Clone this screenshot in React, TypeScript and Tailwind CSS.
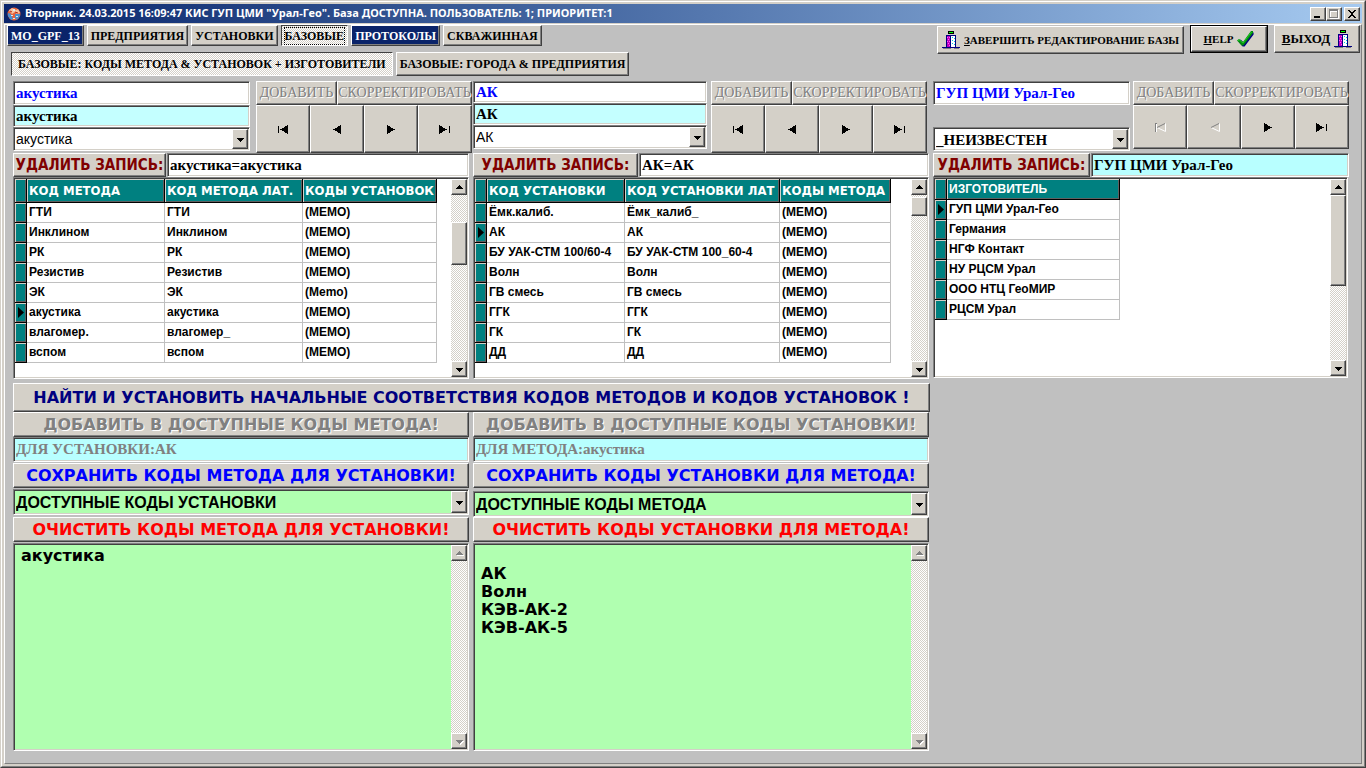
import React from 'react';
import clsx from 'clsx';

const bevel =
  'border border-t-white border-l-white border-r-[#404040] border-b-[#404040] shadow-[inset_-1px_-1px_0_#808080]';
const raised = `${bevel} bg-[#d4d0c8]`;
const sunken =
  'border border-t-[#808080] border-l-[#808080] border-r-white border-b-white p-px shadow-[inset_1px_1px_0_#404040,inset_-1px_-1px_0_#d4d0c8]';
const dither = 'bg-[repeating-conic-gradient(#ffffff_0_25%,#d4d0c8_0_50%)] bg-[length:2px_2px]';
const pressed = `border border-t-[#404040] border-l-[#404040] border-r-white border-b-white ${dither}`;
const serif = 'font-["Liberation_Serif",serif] font-bold';
const verdana = 'font-["DejaVu_Sans",sans-serif] font-bold';
const arial = 'font-["Liberation_Sans",sans-serif] font-bold';
const tahoma = 'font-["DejaVu_Sans_Condensed","DejaVu_Sans",sans-serif] font-bold';
const disabledText = 'text-[#808080] [text-shadow:1px_1px_0_#fff]';

type Dir = 'up' | 'down' | 'left' | 'right';

function Arrow({ dir, muted }: { dir: Dir; muted?: boolean }) {
  const paths: Record<Dir, string> = {
    up: 'M4 2h1v1h1v1h1v1h1v1H1V5h1V4h1V3h1z',
    down: 'M1 3h7v1H7v1H6v1H5v1H4V6H3V5H2V4H1z',
    left: 'M0 4.5 8 0v9z',
    right: 'M8 4.5 0 0v9z',
  };
  return (
    <svg viewBox="0 0 9 9" className="size-[9px] shrink-0" shapeRendering="crispEdges">
      {muted && <path d={paths[dir]} fill="#fff" transform="translate(1 1)" />}
      <path d={paths[dir]} fill={muted ? '#808080' : '#000'} />
    </svg>
  );
}

// Greyed navigator glyphs are only an outline: dark on the slanted side, white on the others
function OutlineArrow({ bar }: { bar?: boolean }) {
  return (
    <svg viewBox="0 0 13 11" className="h-[11px] w-[13px] shrink-0" fill="none">
      {bar && <path d="M1.500 1v9M1 1.500h2" stroke="#808080" />}
      {bar && <path d="M2.500 2v8" stroke="#fff" />}
      <path d="M11.500 1.500v8L3 5.500" stroke="#fff" />
      <path d="M11 1.500 3 5.500" stroke="#808080" />
    </svg>
  );
}

function DoorIcon() {
  return (
    <svg viewBox="0 0 18 18" className="size-[18px] shrink-0" shapeRendering="crispEdges">
      <path d="M0 16h4V4h10v12h4v1H0z" fill="#000080" />
      <path d="M6 0h6v3H6z" fill="#000" />
      <path d="M7 1h4v1H7z" fill="#00ff00" />
      <path d="M5 5h4v11H5z" fill="#c000c0" />
      <path d="M5 6h1v1H5zM7 6h1v1H7zM6 8h1v1H6zM5 10h1v1H5zM7 10h1v1H7zM6 12h1v1H6zM7 14h1v1H7z" fill="#ff60ff" />
      <path d="M9 5h4v11H9z" fill="#fff" />
      <path d="M10 6h1v1h-1zM12 7h1v1h-1zM10 9h1v1h-1zM12 10h1v1h-1zM10 12h1v1h-1zM12 13h1v1h-1z" fill="#00d0e0" />
      <path d="M8 5h1v11H8z" fill="#000080" />
      <path d="M1 17h8v1H1zM12 17h5v1h-5z" fill="#808080" />
    </svg>
  );
}

function CheckIcon() {
  return (
    <svg viewBox="0 0 17 16" className="h-4 w-[17px] shrink-0">
      <path d="M1 10 3 8l3 3L14 1h2v2L7 15H5z" fill="#000080" transform="translate(.6 .6)" />
      <path d="M0 9.500 2 8l4 3L14 0h2v2L6.500 14.500H4.500z" fill="#008a10" />
      <path d="M1 9.500 2.500 9 6 12 14.500 1" stroke="#20d020" strokeWidth="1" fill="none" />
    </svg>
  );
}

function AppIcon() {
  return (
    <svg viewBox="0 0 14 14" className="size-[14px] shrink-0">
      <circle cx="7" cy="7" r="6.500" fill="#e8633c" />
      <path d="M2 3.500 5 1l4 2 2-1 2 4-3 1-2-2-3 2z" fill="#f7c3a0" />
      <path d="M1 6l3 1 2 5-2 1-3-4zM8 7l5 0 0 2-3 4-2-2z" fill="#4a90d0" />
      <path d="M6 2h2v2H6zM4 8h2v1H4zM9 9h2v1H9zM6 11h2v1H6z" fill="#d8ecf8" />
      <path d="M3 4l2 1M8 5l3 1" stroke="#b02818" fill="none" />
    </svg>
  );
}

function ScrollBar({ before, thumb, muted }: { before?: string; thumb?: string; muted?: boolean }) {
  return (
    <div className={clsx('flex w-4 shrink-0 flex-col', dither)}>
      <button aria-label="Вверх" className={clsx('flex h-4 items-center justify-center', raised)}>
        <Arrow dir="up" muted={muted} />
      </button>
      {before && <div className={before} />}
      {thumb && <div className={clsx(raised, thumb)} />}
      <button aria-label="Вниз" className={clsx('mt-auto flex h-4 items-center justify-center', raised)}>
        <Arrow dir="down" muted={muted} />
      </button>
    </div>
  );
}

function Tab({ children, active, navy }: { children: React.ReactNode; active?: boolean; navy?: boolean }) {
  return (
    <button
      className={clsx(
        'h-[21px] whitespace-nowrap px-[3px] text-xs leading-4',
        serif,
        active && pressed,
        !active && !navy && raised,
        navy && bevel,
        navy && 'bg-[#0a246a] text-white'
      )}
    >
      <span className={clsx('block', active && 'outline-1 outline-dotted outline-black')}>{children}</span>
    </button>
  );
}

function Field({ label, value, className }: { label: string; value: string; className?: string }) {
  return (
    <input
      aria-label={label}
      defaultValue={value}
      className={clsx('block w-full min-w-0 pl-0.5 outline-none', sunken, serif, className)}
    />
  );
}

function Combo({ label, value, className }: { label: string; value: string; className?: string }) {
  return (
    <div className={clsx('relative', sunken, className)}>
      <select aria-label={label} className="block size-full appearance-none pl-px outline-none">
        <option>{value}</option>
      </select>
      <span
        className={clsx(
          'pointer-events-none absolute inset-y-px right-px flex w-4 items-center justify-center',
          raised
        )}
      >
        <Arrow dir="down" />
      </span>
    </div>
  );
}

function NavButton({ label, children, disabled }: { label: string; children: React.ReactNode; disabled?: boolean }) {
  return (
    <button aria-label={label} disabled={disabled} className={clsx('flex items-center justify-center', raised)}>
      {children}
    </button>
  );
}

function Bar() {
  return <span className="mx-px h-[7px] w-px bg-black" />;
}

function Navigator({ atStart, className }: { atStart?: boolean; className?: string }) {
  return (
    <div className={clsx('w-[216px] shrink-0', className)}>
      <div className="flex">
        {['ДОБАВИТЬ', 'СКОРРЕКТИРОВАТЬ'].map((text) => (
          <button
            key={text}
            disabled
            className={clsx(
              'h-6 whitespace-nowrap font-["Liberation_Serif",serif] text-sm leading-5 first:w-[81px] last:w-[135px]',
              raised,
              disabledText
            )}
          >
            {text}
          </button>
        ))}
      </div>
      <div className={clsx('grid grid-cols-4', atStart ? 'h-11' : 'h-12')}>
        <NavButton label="Первая" disabled={atStart}>
          {atStart ? <OutlineArrow bar /> : <><Bar /><Arrow dir="left" /></>}
        </NavButton>
        <NavButton label="Предыдущая" disabled={atStart}>
          {atStart ? <OutlineArrow /> : <Arrow dir="left" />}
        </NavButton>
        <NavButton label="Следующая">
          <Arrow dir="right" />
        </NavButton>
        <NavButton label="Последняя">
          <Arrow dir="right" />
          <Bar />
        </NavButton>
      </div>
    </div>
  );
}

function DeleteRow({ value, button, field }: { value: string; button: string; field?: string }) {
  return (
    <div className="mr-1 flex h-6 gap-px">
      <button className={clsx('shrink-0 whitespace-nowrap text-[15px] leading-5 text-[#800000]', tahoma, raised, button)}>
        УДАЛИТЬ ЗАПИСЬ:
      </button>
      <Field label="Запись" value={value} className={clsx('text-[15px]', field ?? 'bg-white')} />
    </div>
  );
}

interface GridProps {
  head: string[];
  widths: string[];
  rows: string[][];
  current: number;
  headClass: string;
  className?: string;
  before?: string;
  thumb: string;
}

const tealCell =
  'border-r border-b border-black bg-[#008080] shadow-[inset_1px_1px_0_#d4d0c8,inset_-1px_-1px_0_#606060]';

function DataGrid({ head, widths, rows, current, headClass, className, before, thumb }: GridProps) {
  return (
    <div className={clsx('flex justify-between bg-white', sunken, className)}>
      <table className="border-separate border-spacing-0 self-start text-left text-xs">
        <thead>
          <tr>
            <th className={clsx('w-3 min-w-3 p-0', tealCell)} />
            {head.map((h, i) => (
              <th
                key={h}
                className={clsx('overflow-hidden whitespace-nowrap px-0.5 py-0 text-white', tealCell, headClass, widths[i])}
              >
                {h}
              </th>
            ))}
          </tr>
        </thead>
        <tbody className={arial}>
          {rows.map((row, r) => (
            <tr key={row[0]}>
              <td className={clsx('p-0', tealCell)}>
                {r === current && (
                  <svg viewBox="0 0 6 11" className="ml-[3px] h-[11px] w-1.5">
                    <path d="M0 0 6 5.500 0 11z" />
                  </svg>
                )}
              </td>
              {row.map((cell, i) => (
                <td
                  key={i}
                  className="h-5 whitespace-nowrap border-r border-b border-[#c0c0c0] px-0.5 py-0 leading-[19px]"
                >
                  {cell}
                </td>
              ))}
            </tr>
          ))}
        </tbody>
      </table>
      <ScrollBar before={before} thumb={thumb} />
    </div>
  );
}

function BigButton({ children, className, disabled }: { children: React.ReactNode; className?: string; disabled?: boolean }) {
  return (
    <button
      disabled={disabled}
      className={clsx('whitespace-nowrap text-base leading-5', verdana, raised, disabled && disabledText, className)}
    >
      {children}
    </button>
  );
}

interface CodesProps {
  add: string;
  target: string;
  save: string;
  combo: string;
  clear: string;
  memo: string;
  comboClass: string;
}

function CodesPanel({ add, target, save, combo, clear, memo, comboClass }: CodesProps) {
  return (
    <div className="mr-1 flex min-w-0 flex-col">
      <BigButton disabled className="h-[25px]">{add}</BigButton>
      <Field label="Для" value={target} className="h-[25px] bg-[#b8ffff] text-[15px] text-[#808080]" />
      <BigButton className="mt-px h-[25px] text-[#0000ff]">{save}</BigButton>
      <Combo label={combo} value={combo} className={clsx('h-[26px] bg-[#b0ffb0] text-base', arial, comboClass)} />
      <BigButton className="h-[25px] text-[#ff0000]">{clear}</BigButton>
      <div className={clsx('mt-px flex flex-1 bg-[#b0ffb0]', sunken)}>
        <textarea
          aria-label={clear}
          defaultValue={memo}
          className={clsx('block min-w-0 flex-1 resize-none px-1.5 py-0.5 text-base leading-[18px] outline-none', verdana)}
        />
        <ScrollBar muted />
      </div>
    </div>
  );
}

const methods = [
  ['ГТИ', 'ГТИ', '(МЕМО)'],
  ['Инклином', 'Инклином', '(МЕМО)'],
  ['РК', 'РК', '(МЕМО)'],
  ['Резистив', 'Резистив', '(МЕМО)'],
  ['ЭК', 'ЭК', '(Memo)'],
  ['акустика', 'акустика', '(МЕМО)'],
  ['влагомер.', 'влагомер_', '(МЕМО)'],
  ['вспом', 'вспом', '(МЕМО)'],
];

const devices = [
  ['Ёмк.калиб.', 'Ёмк_калиб_', '(МЕМО)'],
  ['АК', 'АК', '(МЕМО)'],
  ['БУ УАК-СТМ 100/60-4', 'БУ УАК-СТМ 100_60-4', '(МЕМО)'],
  ['Волн', 'Волн', '(МЕМО)'],
  ['ГВ смесь', 'ГВ смесь', '(МЕМО)'],
  ['ГГК', 'ГГК', '(МЕМО)'],
  ['ГК', 'ГК', '(МЕМО)'],
  ['ДД', 'ДД', '(МЕМО)'],
];

const makers = [
  ['ГУП ЦМИ Урал-Гео'],
  ['Германия'],
  ['НГФ Контакт'],
  ['НУ РЦСМ Урал'],
  ['ООО НТЦ ГеоМИР'],
  ['РЦСМ Урал'],
];

function TitleBar() {
  const box = 'flex h-[14px] items-center justify-center';
  return (
    <header className="flex h-[19px] items-center gap-1 bg-linear-to-r from-[#0a246a] to-[#a6caf0] pl-[3px] pr-0.5">
      <AppIcon />
      <h1 className='flex-1 whitespace-nowrap font-["Noto_Sans",sans-serif] text-[11px] font-bold text-white'>
        Вторник. 24.03.2015 16:09:47 КИС ГУП ЦМИ "Урал-Гео". База ДОСТУПНА. ПОЛЬЗОВАТЕЛЬ: 1; ПРИОРИТЕТ:1
      </h1>
      <div className="flex">
        <button aria-label="Свернуть" className={clsx(box, 'w-4', raised)}>
          <svg viewBox="0 0 10 10" className="size-2.5" shapeRendering="crispEdges">
            <path d="M1 7h6v2H1z" />
          </svg>
        </button>
        <button aria-label="Развернуть" disabled className={clsx(box, 'w-4', raised)}>
          <svg viewBox="0 0 10 10" className="size-2.5" shapeRendering="crispEdges" fill="none">
            <path d="M1.500 1.500h8v8h-8zM1 2.500h9" stroke="#fff" />
            <path d="M.5.5h8v8h-8zM0 1.500h9" stroke="#808080" />
          </svg>
        </button>
        <button aria-label="Закрыть" className={clsx(box, 'ml-0.5 w-4', raised)}>
          <svg viewBox="0 0 10 10" className="size-2.5" shapeRendering="crispEdges">
            <path d="M1 1h2v1h1v1h2V2h1V1h2v1H8v1H7v1H6v2h1v1h1v1h1v1H7V8H6V7H4v1H3v1H1V8h1V7h1V6h1V4H3V3H2V2H1z" />
          </svg>
        </button>
      </div>
    </header>
  );
}

export default function App() {
  return (
    <div className="flex min-h-screen flex-col border border-[#d4d0c8] border-r-[#404040] border-b-[#404040] bg-[#d4d0c8]">
      <div className="flex flex-1 flex-col border border-t-white border-l-white border-r-[#808080] border-b-[#808080] p-0.5">
        <TitleBar />
        <div className="mt-px flex flex-1 flex-col border border-t-white border-l-white border-r-[#808080] border-b-[#808080] bg-[#c0c0c0]">
          <div className="flex justify-between">
            <nav className="pl-0.5">
              <div className="flex gap-[3px]">
                <Tab navy>MO_GPF_13</Tab>
                <Tab>ПРЕДПРИЯТИЯ</Tab>
                <Tab>УСТАНОВКИ</Tab>
                <Tab active>БАЗОВЫЕ</Tab>
                <Tab navy>ПРОТОКОЛЫ</Tab>
                <Tab>СКВАЖИННАЯ</Tab>
              </div>
              <div className={clsx('mt-1.5 flex gap-[3px] pl-1 text-xs', serif)}>
                <button className={clsx('h-6 whitespace-nowrap px-1.5', pressed)}>
                  БАЗОВЫЕ: КОДЫ МЕТОДА &amp; УСТАНОВОК + ИЗГОТОВИТЕЛИ
                </button>
                <button className={clsx('h-6 whitespace-nowrap px-[3px]', raised)}>
                  БАЗОВЫЕ: ГОРОДА &amp; ПРЕДПРИЯТИЯ
                </button>
              </div>
            </nav>
            <div className={clsx('flex gap-1.5 pr-px text-[11px]', serif)}>
              <button className={clsx('mt-px flex h-7 items-center gap-1 whitespace-nowrap px-1', raised)}>
                <DoorIcon />
                <span><u>З</u>АВЕРШИТЬ РЕДАКТИРОВАНИЕ БАЗЫ</span>
              </button>
              <div className="h-7 border border-black">
                <button className={clsx('flex h-full w-[76px] items-center justify-center gap-1', raised)}>
                  <span><u>H</u>ELP</span>
                  <CheckIcon />
                </button>
              </div>
              <button className={clsx('flex h-7 w-[86px] items-center justify-center gap-1 text-[13px]', raised)}>
                <span><u>В</u>ЫХОД</span>
                <DoorIcon />
              </button>
            </div>
          </div>

          <main className="mt-[5px] flex flex-1 pb-3 pl-2 pr-2">
            <section className="flex min-w-0 flex-[920] flex-col">
              <div className="grid grid-cols-2">
                <div className="min-w-0">
                  <div className="flex h-[72px] gap-1.5">
                    <div className="min-w-0 flex-1">
                      <Field label="Код метода" value="акустика" className="h-6 bg-white text-[15px] text-[#0000ff]" />
                      <Field label="Код метода лат." value="акустика" className="h-[22px] bg-[#c4ffff] text-[15px]" />
                      <Combo label="Метод" value="акустика" className="h-6 bg-white font-['Liberation_Sans',sans-serif] text-sm" />
                    </div>
                    <Navigator className="mr-px" />
                  </div>
                  <DeleteRow value="акустика=акустика" button="w-[153px]" />
                  <DataGrid
                    head={['КОД МЕТОДА', 'КОД МЕТОДА ЛАТ.', 'КОДЫ УСТАНОВОК']}
                    widths={['w-[138px]', 'w-[138px]', 'w-[134px]']}
                    rows={methods}
                    current={5}
                    headClass={clsx('h-6 text-[13px]', tahoma)}
                    className="mr-1 h-[202px]"
                    before="h-[27px]"
                    thumb="h-[43px]"
                  />
                </div>
                <div className="min-w-0">
                  <div className="flex h-[72px] gap-1">
                    <div className="min-w-0 flex-1">
                      <Field label="Код установки" value="АК" className="h-[22px] bg-white text-[15px] text-[#0000ff]" />
                      <Field label="Код установки лат." value="АК" className="h-[22px] bg-[#c4ffff] text-[15px]" />
                      <Combo label="Установка" value="АК" className="h-6 bg-white font-['Liberation_Sans',sans-serif] text-sm" />
                    </div>
                    <Navigator className="mr-1.5" />
                  </div>
                  <DeleteRow value="АК=АК" button="w-[165px]" />
                  <DataGrid
                    head={['КОД УСТАНОВКИ', 'КОД УСТАНОВКИ ЛАТ', 'КОДЫ МЕТОДА']}
                    widths={['w-[138px]', 'w-[155px]', 'w-[111px]']}
                    rows={devices}
                    current={1}
                    headClass={clsx('h-6 text-[13px]', tahoma)}
                    className="mr-1 h-[202px]"
                    before="h-0.5"
                    thumb="h-[19px]"
                  />
                </div>
              </div>
              <BigButton className="mr-[3px] mt-1 h-[29px] text-[#000080]">
                НАЙТИ И УСТАНОВИТЬ НАЧАЛЬНЫЕ СООТВЕТСТВИЯ КОДОВ МЕТОДОВ И КОДОВ УСТАНОВОК !
              </BigButton>
              <div className="grid flex-1 grid-cols-2">
                <CodesPanel
                  add="ДОБАВИТЬ В ДОСТУПНЫЕ КОДЫ МЕТОДА!"
                  target="ДЛЯ УСТАНОВКИ:АК"
                  save="СОХРАНИТЬ КОДЫ МЕТОДА ДЛЯ УСТАНОВКИ!"
                  combo="ДОСТУПНЫЕ КОДЫ УСТАНОВКИ"
                  clear="ОЧИСТИТЬ КОДЫ МЕТОДА ДЛЯ УСТАНОВКИ!"
                  memo="акустика"
                  comboClass="mt-px mb-0.5"
                />
                <CodesPanel
                  add="ДОБАВИТЬ В ДОСТУПНЫЕ КОДЫ УСТАНОВКИ!"
                  target="ДЛЯ МЕТОДА:акустика"
                  save="СОХРАНИТЬ КОДЫ УСТАНОВКИ ДЛЯ МЕТОДА!"
                  combo="ДОСТУПНЫЕ КОДЫ МЕТОДА"
                  clear="ОЧИСТИТЬ КОДЫ УСТАНОВКИ ДЛЯ МЕТОДА!"
                  memo={'\nАК\nВолн\nКЭВ-АК-2\nКЭВ-АК-5'}
                  comboClass="mt-[3px]"
                />
              </div>
            </section>
            <section className="min-w-0 flex-[420]">
              <div className="flex h-[72px] gap-[3px]">
                <div className="flex min-w-0 flex-1 flex-col justify-between pb-0.5">
                  <Field label="Изготовитель" value="ГУП ЦМИ Урал-Гео" className="h-6 bg-white text-[15px] text-[#0000ff]" />
                  <Combo label="Предприятие" value="_НЕИЗВЕСТЕН" className={clsx('h-6 bg-white text-[15px]', serif)} />
                </div>
                <Navigator atStart className="mr-1" />
              </div>
              <DeleteRow value="ГУП ЦМИ Урал-Гео" button="w-[157px]" field="bg-[#b8ffff]" />
              <DataGrid
                head={['ИЗГОТОВИТЕЛЬ']}
                widths={['w-[173px]']}
                rows={makers}
                current={0}
                headClass={clsx('h-[21px] text-xs', arial)}
                className="mr-[5px] h-[201px]"
                thumb="h-[91px]"
              />
            </section>
          </main>
        </div>
      </div>
    </div>
  );
}
